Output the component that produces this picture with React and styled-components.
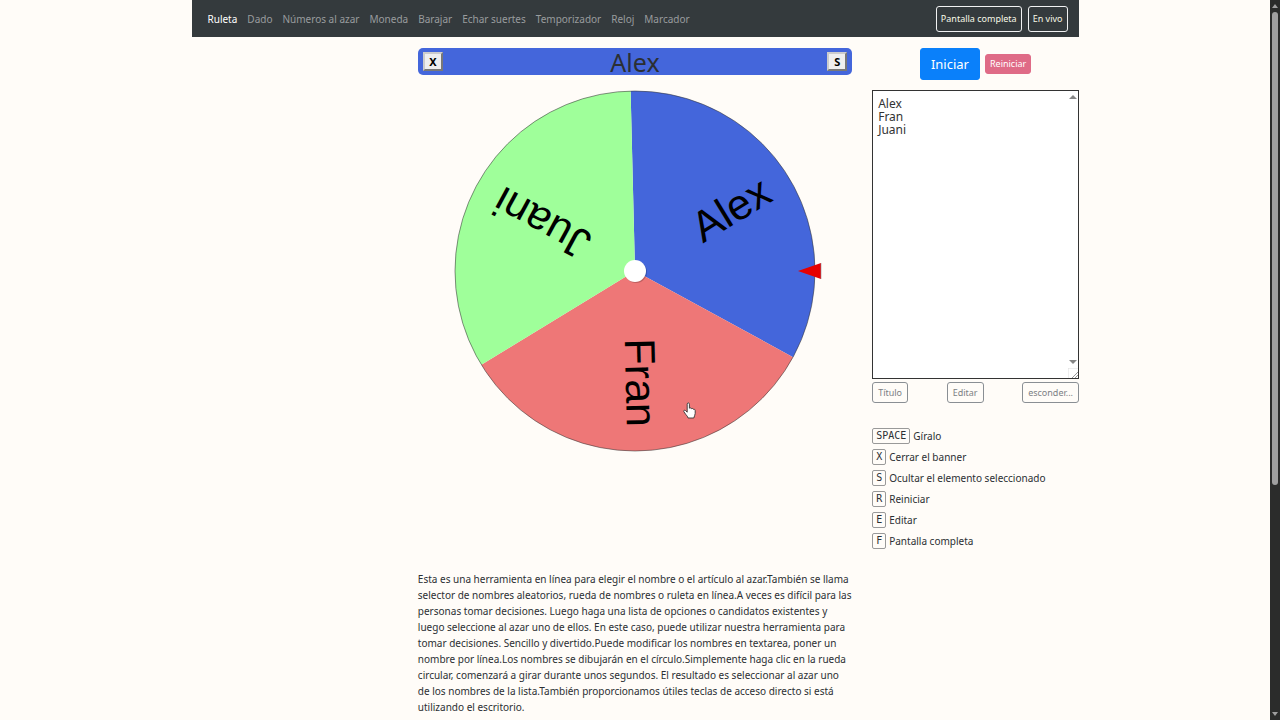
import React, { useState } from "react";
import styled, { createGlobalStyle } from "styled-components";

const NAV_LINKS = [
  "Ruleta",
  "Dado",
  "Números al azar",
  "Moneda",
  "Barajar",
  "Echar suertes",
  "Temporizador",
  "Reloj",
  "Marcador",
];

const SHORTCUTS = [
  { keyName: "SPACE", label: "Gíralo" },
  { keyName: "X", label: "Cerrar el banner" },
  { keyName: "S", label: "Ocultar el elemento seleccionado" },
  { keyName: "R", label: "Reiniciar" },
  { keyName: "E", label: "Editar" },
  { keyName: "F", label: "Pantalla completa" },
];

const SLICE_COLORS = ["#4466db", "#ee7777", "#9fff9a"];
const RADIUS = 180;
const START_ANGLE = -91.4;

function point(angle, radius) {
  const rad = (angle * Math.PI) / 180;
  return `${radius * Math.cos(rad)} ${radius * Math.sin(rad)}`;
}

function Wheel({ names }) {
  const step = 360 / names.length;

  return (
    <WheelSvg viewBox="-190 -181 380 362" role="img" aria-label="Ruleta">
      {names.map((name, i) => {
        const from = START_ANGLE + i * step;
        return (
          <path
            key={name}
            d={`M0 0 L${point(from, RADIUS)} A${RADIUS} ${RADIUS} 0 0 1 ${point(
              from + step,
              RADIUS
            )} Z`}
            fill={SLICE_COLORS[i % SLICE_COLORS.length]}
          />
        );
      })}
      <circle r={RADIUS} fill="none" stroke="#333" strokeOpacity="0.55" />
      {names.map((name, i) => (
        <g
          key={name}
          transform={`rotate(${START_ANGLE + (i + 0.5) * step}) translate(156 12)`}
        >
          <SliceText>{name}</SliceText>
        </g>
      ))}
      <circle cx="1" cy="1" r="11" fill="#000" fillOpacity="0.2" />
      <circle r="11" fill="#fff" />
      <path d="M163 0 L186 -8 L186 8 Z" fill="#e60000" />
      <path d="M186 -8 V8" stroke="#8a8a9a" strokeOpacity="0.6" />
      {/* hand cursor */}
      <g transform="translate(48 131)">
        <path
          d="M4.2 2.2 C4.2 .4 6.4 .4 6.4 2.2 V6.2 C7 5.6 8.2 5.8 8.4 6.7 C9.2 6.2 10.2 6.5 10.4 7.3 C11.4 7 12.2 7.6 12.2 8.6 V11.4 C12.2 13.4 11 14.2 10.8 16 H5 C4.8 14.4 3.4 13.4 2.6 12.2 L.8 9.6 C.2 8.5 1.6 7.7 2.6 8.6 L4.2 10.2 Z"
          fill="#fff"
          stroke="#333"
          strokeWidth="0.9"
        />
      </g>
    </WheelSvg>
  );
}

function App() {
  const [text, setText] = useState("Alex\nFran\nJuani");
  const names = text.split("\n").filter(Boolean);

  return (
    <Window>
      <GlobalStyle />
      <Page>
        <Nav>
          <NavLinks>
            {NAV_LINKS.map((link, i) => (
              <NavLink key={link} href="#" $active={i === 0}>
                {link}
              </NavLink>
            ))}
          </NavLinks>
          <NavButtons>
            <NavButton type="button">Pantalla completa</NavButton>
            <NavButton type="button">En vivo</NavButton>
          </NavButtons>
        </Nav>

        <Columns>
          <Main>
            <Banner>
              <BannerButton type="button">X</BannerButton>
              <BannerTitle>Alex</BannerTitle>
              <BannerButton type="button">S</BannerButton>
            </Banner>
            <Wheel names={names} />
          </Main>

          <Side>
            <Actions>
              <StartButton type="button">Iniciar</StartButton>
              <ResetButton type="button">Reiniciar</ResetButton>
            </Actions>
            <Editor>
              <NamesInput
                aria-label="Nombres"
                spellCheck={false}
                value={text}
                onChange={(e) => setText(e.target.value)}
              />
              <EditorScroll>
                <Arrow viewBox="0 0 8 5">
                  <path d="M0 5 L4 1 L8 5 Z" fill="#858585" />
                </Arrow>
                <ScrollEnd>
                  <Arrow viewBox="0 0 8 5">
                    <path d="M0 1 L4 5 L8 1 Z" fill="#858585" />
                  </Arrow>
                  <Grip viewBox="0 0 10 10">
                    <path d="M0 10 V0 H10" fill="none" stroke="#ddd" />
                    <path d="M4 10 L10 4 M7 10 L10 7" stroke="#999" />
                  </Grip>
                </ScrollEnd>
              </EditorScroll>
            </Editor>
            <Tools>
              <ToolButton type="button">Título</ToolButton>
              <ToolButton type="button">Editar</ToolButton>
              <ToolButton type="button">esconder...</ToolButton>
            </Tools>
            <Shortcuts>
              {SHORTCUTS.map(({ keyName, label }) => (
                <Shortcut key={keyName}>
                  <Key>{keyName}</Key>
                  {label}
                </Shortcut>
              ))}
            </Shortcuts>
          </Side>

          <Description>
            Esta es una herramienta en línea para elegir el nombre o el artículo
            al azar.También se llama selector de nombres aleatorios, rueda de
            nombres o ruleta en línea.A veces es difícil para las personas tomar
            decisiones. Luego haga una lista de opciones o candidatos existentes
            y luego seleccione al azar uno de ellos. En este caso, puede utilizar
            nuestra herramienta para tomar decisiones. Sencillo y
            divertido.Puede modificar los nombres en textarea, poner un nombre
            por línea.Los nombres se dibujarán en el círculo.Simplemente haga
            clic en la rueda circular, comenzará a girar durante unos segundos.
            El resultado es seleccionar al azar uno de los nombres de la
            lista.También proporcionamos útiles teclas de acceso directo si está
            utilizando el escritorio.
          </Description>
        </Columns>
      </Page>

      <ScrollRail>
        <Arrow viewBox="0 0 8 5">
          <path d="M1 5 L4 1 L7 5 Z" fill="#9f9f9f" />
        </Arrow>
        <ScrollTrack>
          <ScrollThumb />
        </ScrollTrack>
        <Arrow viewBox="0 0 8 5">
          <path d="M1 0 L4 4 L7 0 Z" fill="#9f9f9f" />
        </Arrow>
      </ScrollRail>
    </Window>
  );
}

export default App;

const GlobalStyle = createGlobalStyle`
  * {
    box-sizing: border-box;
  }

  body {
    margin: 0;
    background: #fffcf8;
    color: #2b2f33;
    font-family: "Noto Sans", "Open Sans", sans-serif;
    font-size: 10px;
    line-height: 16px;
  }

  button,
  textarea {
    font-family: inherit;
    margin: 0;
  }
`;

const Window = styled.div`
  display: flex;
  height: 100vh;
  overflow: hidden;
`;

const Page = styled.div`
  flex: 1;
  min-width: 0;
  overflow: hidden;
`;

const Nav = styled.nav`
  display: flex;
  align-items: center;
  justify-content: space-between;
  max-width: 887px;
  margin: 0 auto;
  padding: 6px 11px 5px 16px;
  background: #343a3d;
`;

const NavLinks = styled.div`
  display: flex;
  gap: 10px;
`;

const NavLink = styled.a`
  color: ${(props) => (props.$active ? "#fff" : "#999c9e")};
  text-decoration: none;
  white-space: nowrap;
`;

const NavButtons = styled.div`
  display: flex;
  gap: 6px;
`;

const Button = styled.button`
  padding: 0 5px;
  border: 1px solid;
  border-radius: 3px;
  background: transparent;
  font-size: 9px;
  line-height: 18px;
  white-space: nowrap;
  cursor: pointer;
`;

const NavButton = styled(Button)`
  border-color: #f0f1f2;
  padding: 0 4px;
  color: #f8f9e8;
  line-height: 24px;
`;

const Columns = styled.div`
  display: grid;
  grid-template-columns: 1fr 2.1fr 1fr;
  gap: 22px 20px;
  max-width: 888px;
  margin: 0 auto;
  padding-top: 11px;
`;

const Main = styled.main`
  grid-column: 2;
`;

const Banner = styled.div`
  display: flex;
  align-items: center;
  justify-content: space-between;
  height: 27px;
  margin-bottom: 15px;
  padding: 0 5px;
  border-radius: 5px;
  background: #4466db;
`;

const BannerTitle = styled.h1`
  margin: 0;
  font-size: 25px;
  font-weight: 400;
  line-height: 28px;
`;

const BannerButton = styled.button`
  width: 20px;
  height: 19px;
  padding: 0;
  border: 2px outset #ccc;
  background: #efefef;
  color: #000;
  font-size: 11px;
  font-weight: 700;
  line-height: 14px;
`;

const WheelSvg = styled.svg`
  display: block;
  width: 100%;
  max-width: 380px;
  margin: 0 auto;
`;

const SliceText = styled.text`
  font-family: "Liberation Sans", Arial, sans-serif;
  font-size: 43px;
  text-anchor: end;
`;

const Side = styled.aside`
  grid-column: 3;
  min-width: 0;
`;

const Actions = styled.div`
  display: flex;
  align-items: center;
  justify-content: center;
  gap: 5px;
  margin-bottom: 10px;
`;

const StartButton = styled(Button)`
  padding: 0 10px;
  border-color: #0a80fa;
  background: #0a80fa;
  color: #fff;
  font-size: 13px;
  line-height: 30px;
`;

const ResetButton = styled(Button)`
  padding: 0 4px;
  border-color: #df6b87;
  background: #df6b87;
  color: #fff;
`;

const Editor = styled.div`
  position: relative;
`;

const NamesInput = styled.textarea`
  display: block;
  width: 100%;
  height: 289px;
  padding: 6px 16px 6px 5px;
  border: 1px solid #333;
  background: #fff;
  color: #333;
  font-size: 12px;
  line-height: 13px;
  resize: none;
  outline: none;
`;

const EditorScroll = styled.div`
  position: absolute;
  top: 1px;
  right: 1px;
  bottom: 1px;
  display: flex;
  flex-direction: column;
  justify-content: space-between;
  align-items: center;
  width: 10px;
  padding-top: 3px;
  pointer-events: none;
`;

const ScrollEnd = styled.div`
  display: flex;
  flex-direction: column;
  align-items: center;
  gap: 4px;
`;

const Arrow = styled.svg`
  display: block;
  width: 8px;
  height: 5px;
`;

const Grip = styled.svg`
  display: block;
  width: 10px;
  height: 10px;
`;

const Tools = styled.div`
  display: flex;
  justify-content: space-between;
  margin-top: 3px;
`;

const ToolButton = styled(Button)`
  border-color: #8a8f94;
  color: #7c8084;
  line-height: 19px;
`;

const Shortcuts = styled.ul`
  display: flex;
  flex-direction: column;
  gap: 5px;
  margin: 25px 0 0;
  padding: 0;
  list-style: none;
`;

const Shortcut = styled.li`
  display: flex;
  align-items: center;
  gap: 3px;
  line-height: 16px;
`;

const Key = styled.kbd`
  padding: 0 3px;
  border: 1px solid #999;
  border-radius: 2px;
  font-family: "DejaVu Sans Mono", monospace;
  font-size: 10px;
  line-height: 14px;
`;

const Description = styled.p`
  grid-column: 2;
  margin: 0;
`;

const ScrollRail = styled.div`
  display: flex;
  flex-direction: column;
  align-items: center;
  width: 10px;
  padding: 3px 0;
  background: #2b2c2b;
`;

const ScrollTrack = styled.div`
  flex: 1;
  width: 6px;
  margin: 4px 0;
`;

const ScrollThumb = styled.div`
  height: 68%;
  border-radius: 3px;
  background: #9f9f9f;
`;
